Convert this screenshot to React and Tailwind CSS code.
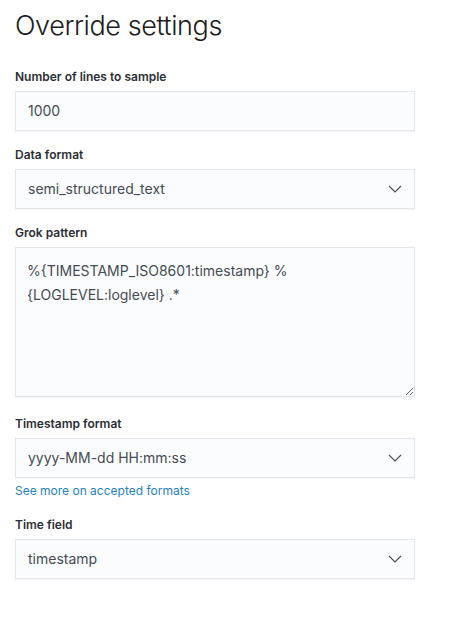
const FIELD =
    'w-full h-10 bg-[#fbfcfd] border border-[#e3e6ea] shadow-[0_1px_1px_rgba(0,0,0,0.04)] px-3 text-sm text-[#454a55] flex items-center';

function Label({ children }) {
    return <div className="h-5 leading-5 text-xs font-semibold text-[#2b2e36] mb-1">{children}</div>;
}

function Chevron() {
    return (
        <svg width="14" height="8" viewBox="0 0 14 8" fill="none" className="ml-auto">
            <path d="M1 1L7 7L13 1" stroke="#454a55" strokeWidth="1.1" />
        </svg>
    );
}

function Select({ value }) {
    return (
        <div className={FIELD}>
            <span>{value}</span>
            <Chevron />
        </div>
    );
}

export default function App() {
    return (
        <div className="w-[455px] h-[620px] bg-white px-[15px] pt-[6px] font-['Inter',_'Liberation_Sans',_sans-serif]">
            <h1 className="h-10 leading-10 text-[27px] font-light text-[#1a1c21] tracking-[-0.015em]">
                Override settings
            </h1>

            <div className="mt-[21px] w-[400px]">
                <Label>Number of lines to sample</Label>
                <div className={FIELD}>1000</div>

                <div className="mt-[14px]">
                    <Label>Data format</Label>
                    <Select value="semi_structured_text" />
                </div>

                <div className="mt-[14px]">
                    <Label>Grok pattern</Label>
                    <textarea
                        className="block w-full h-[150px] bg-[#fbfcfd] border border-[#e3e6ea] shadow-[0_1px_1px_rgba(0,0,0,0.04)] px-[11px] py-[11px] text-sm leading-6 text-[#454a55] resize-y outline-none"
                        defaultValue="%{TIMESTAMP_ISO8601:timestamp} %{LOGLEVEL:loglevel} .*"
                    />
                </div>

                <div className="mt-[17px]">
                    <Label>Timestamp format</Label>
                    <Select value="yyyy-MM-dd HH:mm:ss" />
                    <a href="#" className="block mt-[5px] text-xs leading-4 text-[#1f7fc4]">
                        See more on accepted formats
                    </a>
                </div>

                <div className="mt-[16px]">
                    <Label>Time field</Label>
                    <Select value="timestamp" />
                </div>
            </div>
        </div>
    );
}
